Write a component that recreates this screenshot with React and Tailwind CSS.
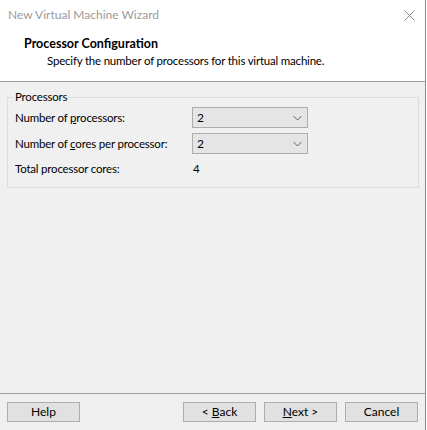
const font = { fontFamily: 'Lato, "Noto Sans", sans-serif' }

// Combo box with the value on the left and a thin chevron on the right
function ComboBox({ value }) {
  return (
    <div className="w-[116px] h-[21px] border border-[#adadad] bg-[#e5e5e5] flex items-center justify-between pl-[4px] pr-[5px] text-[12px] text-black">
      <span>{value}</span>
      <svg width="9" height="6" viewBox="0 0 9 6">
        <path d="M0.5 1 L4.5 5 L8.5 1" fill="none" stroke="#606060" strokeWidth="1" />
      </svg>
    </div>
  )
}

function WizardButton({ children }) {
  return (
    <button className="w-[73px] h-[20px] border border-[#adadad] bg-[#e1e1e1] text-[12px] text-black leading-none flex items-center justify-center">
      <span className="whitespace-pre">{children}</span>
    </button>
  )
}

export default function App() {
  return (
    <div className="w-[427px] h-[430px] bg-white flex" style={font}>
      <div className="w-[426px] h-[430px] flex flex-col border-r border-[#8c8c8c]">
        {/* Title bar */}
        <div className="h-[30px] bg-white flex items-center justify-between pl-[8px] pr-[10px]">
          <span className="text-[12px] text-[#9b9b9b]">New Virtual Machine Wizard</span>
          <svg width="11" height="11" viewBox="0 0 11 11">
            <path d="M0.5 0.5 L10.5 10.5 M10.5 0.5 L0.5 10.5" stroke="#8a8a8a" strokeWidth="1" />
          </svg>
        </div>

        {/* Page header */}
        <div className="h-[52px] bg-white border-b border-[#a0a0a0] pt-[6px]">
          <div className="pl-[24px] text-[12.5px] font-bold text-black leading-[16px]">Processor Configuration</div>
          <div className="pl-[47px] mt-[1px] text-[11.5px] tracking-[-0.2px] text-black leading-[16px]">
            Specify the number of processors for this virtual machine.
          </div>
        </div>

        {/* Body */}
        <div className="flex-1 bg-[#f0f0f0] flex flex-col">
          <div className="relative ml-[7px] mt-[15px] w-[412px] h-[91px] border border-[#dcdcdc] pl-[7px] pt-[9px] text-[11.5px] tracking-[-0.2px] text-black">
            <span className="absolute -top-[9px] left-[6px] px-[1px] bg-[#f0f0f0] leading-[16px]">Processors</span>
            <div className="flex items-center h-[21px]">
              <span className="w-[177px] whitespace-nowrap">Number of <u>p</u>rocessors:</span>
              <ComboBox value="2" />
            </div>
            <div className="flex items-center h-[21px] mt-[5px]">
              <span className="w-[177px] whitespace-nowrap">Number of <u>c</u>ores per processor:</span>
              <ComboBox value="2" />
            </div>
            <div className="flex items-center h-[16px] mt-[7px]">
              <span className="w-[178px] whitespace-nowrap">Total processor cores:</span>
              <span>4</span>
            </div>
          </div>

          <div className="flex-1" />

          {/* Footer buttons */}
          <div className="border-t border-[#a0a0a0] h-[37px] pt-[8px] px-[7px] flex">
            <WizardButton>Help</WizardButton>
            <div className="flex-1" />
            <div className="flex gap-[8px]">
              <WizardButton>&lt; <u>B</u>ack</WizardButton>
              <WizardButton><u>N</u>ext &gt;</WizardButton>
              <WizardButton>Cancel</WizardButton>
            </div>
          </div>
        </div>
      </div>
    </div>
  )
}
